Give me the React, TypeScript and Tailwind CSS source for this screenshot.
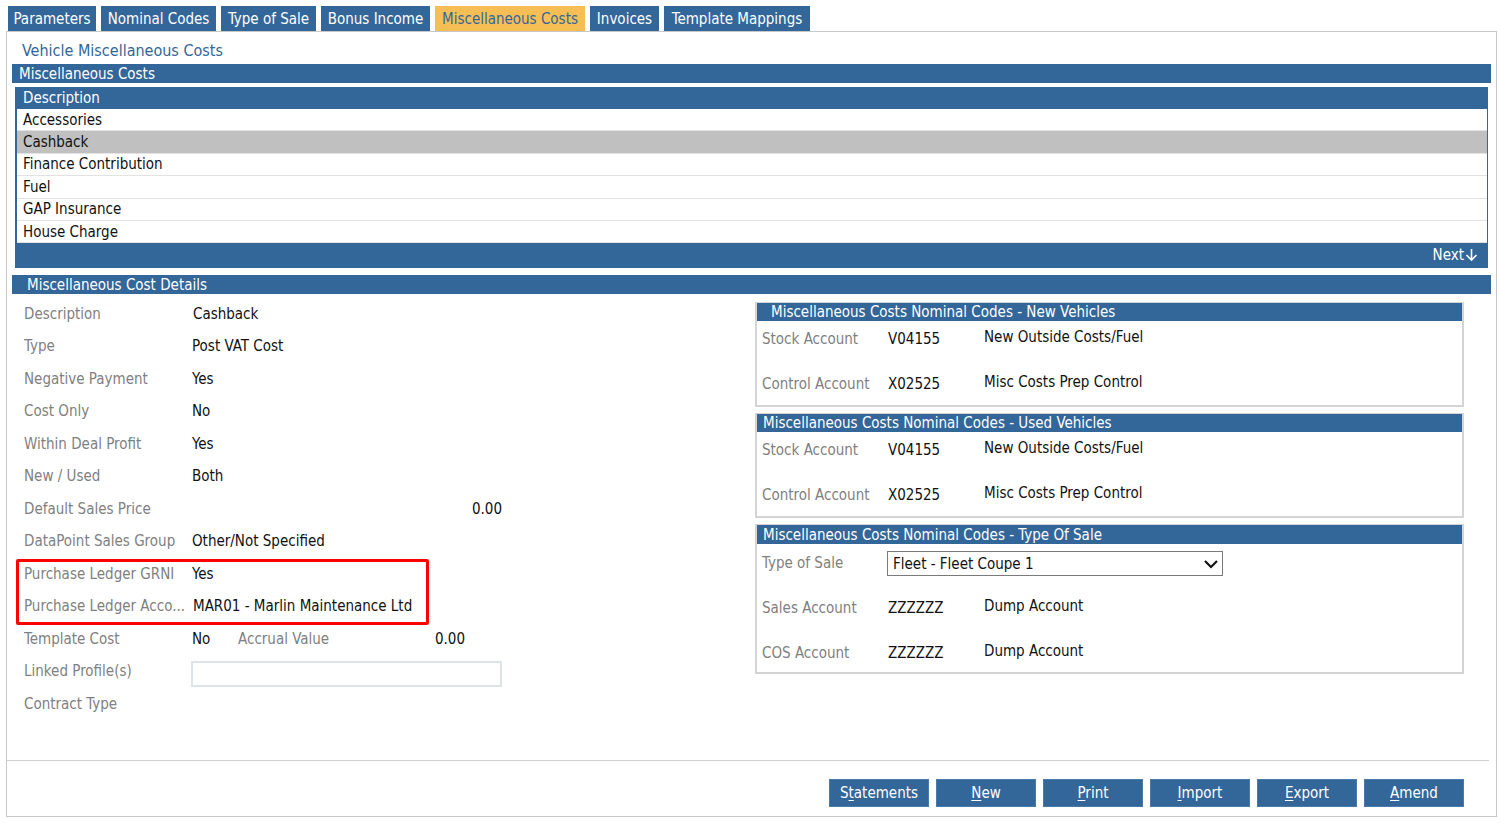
import React from "react";

const tabs = [
  { label: "Parameters", w: "w-[88px]" },
  { label: "Nominal Codes", w: "w-[115px]" },
  { label: "Type of Sale", w: "w-[95px]" },
  { label: "Bonus Income", w: "w-[109px]" },
  { label: "Miscellaneous Costs", w: "w-[150px]", active: true },
  { label: "Invoices", w: "w-[69px]" },
  { label: "Template Mappings", w: "w-[146px]" },
];

const costs = ["Accessories", "Cashback", "Finance Contribution", "Fuel", "GAP Insurance", "House Charge"];

function Row({ label, children }: { label: string; children?: React.ReactNode }) {
  return (
    <div className="h-[32.5px] flex items-center">
      <div className="w-[168px] text-[#808080] whitespace-nowrap overflow-hidden">{label}</div>
      <div className="text-[#111]">{children}</div>
    </div>
  );
}

function AccountRow({ label, code, desc, h }: { label: string; code: string; desc: string; h: string }) {
  return (
    <div className={`${h} flex items-start pl-[5px]`}>
      <div className="w-[126px] pt-[9px] text-[#808080]">{label}</div>
      <div className="w-[96px] pt-[9px] text-[#111]">{code}</div>
      <div className="pt-[7px] text-[#111]">{desc}</div>
    </div>
  );
}

function Btn({ pre, u, post }: { pre?: string; u: string; post: string }) {
  return (
    <button className="w-[100px] h-[28px] bg-[#336699] text-white border border-[#4a7aaa]">
      {pre}
      <span className="underline underline-offset-2">{u}</span>
      {post}
    </button>
  );
}

export default function App() {
  return (
    <div className="w-[1500px] h-[823px] bg-white text-[15px] leading-[18px] font-stretch-condensed font-['DejaVu_Sans_Condensed','DejaVu_Sans',sans-serif]">
      {/* Tabs */}
      <div className="flex gap-[5px] pl-[8px] pt-[6px]">
        {tabs.map((t) => (
          <div
            key={t.label}
            className={`${t.w} shrink-0 h-[25px] flex items-center justify-center whitespace-nowrap ${
              t.active ? "bg-[#f8be56] text-[#336699]" : "bg-[#336699] text-white"
            }`}
          >
            {t.label}
          </div>
        ))}
      </div>

      {/* Main panel */}
      <div className="ml-[6px] w-[1491px] h-[786px] border border-[#c8c8c8] flex flex-col">
        <div className="px-[5px]">
          <div className="h-[32px] flex items-end pb-[4px] pl-[10px] text-[16px] text-[#336699]">
            Vehicle Miscellaneous Costs
          </div>
          <div className="h-[19px] bg-[#336699] text-white pl-[7px] flex items-center">Miscellaneous Costs</div>

          {/* Grid */}
          <div className="mx-[3px] mt-[4px] bg-[#336699] p-[1px] pl-[2px]">
            <div className="h-[19px] text-white pl-[6px] flex items-center">Description</div>
            <div className="bg-white mt-[2px]">
              {costs.map((c) => (
                <div
                  key={c}
                  className={`h-[22.4px] flex items-center pl-[6px] border-b border-[#e2e2e2] text-[#111] ${
                    c === "Cashback" ? "bg-[#c0c0c0]" : ""
                  }`}
                >
                  {c}
                </div>
              ))}
            </div>
            <div className="h-[24px] flex items-center justify-end pr-[9px] text-white">
              Next
              <svg width="13" height="14" viewBox="0 0 13 14" className="ml-[1px]">
                <path d="M6.5 1v11M1.5 7l5 5 5-5" fill="none" stroke="#fff" strokeWidth="1.6" />
              </svg>
            </div>
          </div>

          <div className="mt-[7px] h-[19px] bg-[#336699] text-white pl-[15px] flex items-center">
            Miscellaneous Cost Details
          </div>

          <div className="flex">
            {/* Left details */}
            <div className="w-[743px] pl-[12px] pt-[3px]">
              <Row label="Description">
                <span className="pl-[1px]">Cashback</span>
              </Row>
              <Row label="Type">Post VAT Cost</Row>
              <Row label="Negative Payment">Yes</Row>
              <Row label="Cost Only">No</Row>
              <Row label="Within Deal Profit">Yes</Row>
              <Row label="New / Used">Both</Row>
              <Row label="Default Sales Price">
                <div className="w-[310px] text-right">0.00</div>
              </Row>
              <Row label="DataPoint Sales Group">Other/Not Specified</Row>
              <div className="relative">
                <Row label="Purchase Ledger GRNI">Yes</Row>
                <Row label="Purchase Ledger Acco...">
                  <span className="pl-[1px]">MAR01 - Marlin Maintenance Ltd</span>
                </Row>
                <div className="absolute left-[-8px] top-[2px] w-[413px] h-[66px] border-[3px] border-[#ff0000] rounded-[2px]" />
              </div>
              <Row label="Template Cost">
                <div className="flex">
                  <div className="w-[46px]">No</div>
                  <div className="w-[227px] flex justify-between">
                    <span className="text-[#808080]">Accrual Value</span>
                    <span>0.00</span>
                  </div>
                </div>
              </Row>
              <Row label="Linked Profile(s)">
                <div className="w-[311px] h-[26px] mt-[6px] -ml-[1px] border-2 border-[#dde3ea]" />
              </Row>
              <Row label="Contract Type" />
            </div>

            {/* Right panels */}
            <div className="w-[709px] pt-[8px] flex flex-col gap-[6px]">
              <div className="border-2 border-[#d4d4d4] border-t-[1px]">
                <div className="h-[18px] bg-[#336699] text-white pl-[14px] flex items-center">
                  Miscellaneous Costs Nominal Codes - New Vehicles
                </div>
                <AccountRow label="Stock Account" code="V04155" desc="New Outside Costs/Fuel" h="h-[45px]" />
                <AccountRow label="Control Account" code="X02525" desc="Misc Costs Prep Control" h="h-[39px]" />
              </div>
              <div className="border-2 border-[#d4d4d4] border-t-[1px]">
                <div className="h-[18px] bg-[#336699] text-white pl-[6px] flex items-center">
                  Miscellaneous Costs Nominal Codes - Used Vehicles
                </div>
                <AccountRow label="Stock Account" code="V04155" desc="New Outside Costs/Fuel" h="h-[45px]" />
                <AccountRow label="Control Account" code="X02525" desc="Misc Costs Prep Control" h="h-[39px]" />
              </div>
              <div className="border-2 border-[#d4d4d4] border-t-[1px]">
                <div className="h-[19px] bg-[#336699] text-white pl-[6px] flex items-center">
                  Miscellaneous Costs Nominal Codes - Type Of Sale
                </div>
                <div className="h-[46px] flex items-start pl-[5px] pt-[7px]">
                  <div className="w-[125px] pt-[3px] text-[#808080]">Type of Sale</div>
                  <div className="w-[336px] h-[25px] border border-[#7a7a7a] flex items-center justify-between pl-[5px] pr-[3px] text-[#111]">
                    <span>Fleet - Fleet Coupe 1</span>
                    <svg width="16" height="12" viewBox="0 0 16 12">
                      <polyline points="2,3 8,9 14,3" fill="none" stroke="#111" strokeWidth="2.2" />
                    </svg>
                  </div>
                </div>
                <AccountRow label="Sales Account" code="ZZZZZZ" desc="Dump Account" h="h-[45px]" />
                <AccountRow label="COS Account" code="ZZZZZZ" desc="Dump Account" h="h-[37px]" />
              </div>
            </div>
          </div>
        </div>

        <div className="flex-1" />

        {/* Footer */}
        <div className="mr-[7px] border-t border-[#d0d0d0] pt-[18px] pb-[9px] pr-[25px] flex justify-end gap-[7px]">
          <Btn pre="S" u="t" post="atements" />
          <Btn u="N" post="ew" />
          <Btn u="P" post="rint" />
          <Btn u="I" post="mport" />
          <Btn u="E" post="xport" />
          <Btn u="A" post="mend" />
        </div>
      </div>
    </div>
  );
}
